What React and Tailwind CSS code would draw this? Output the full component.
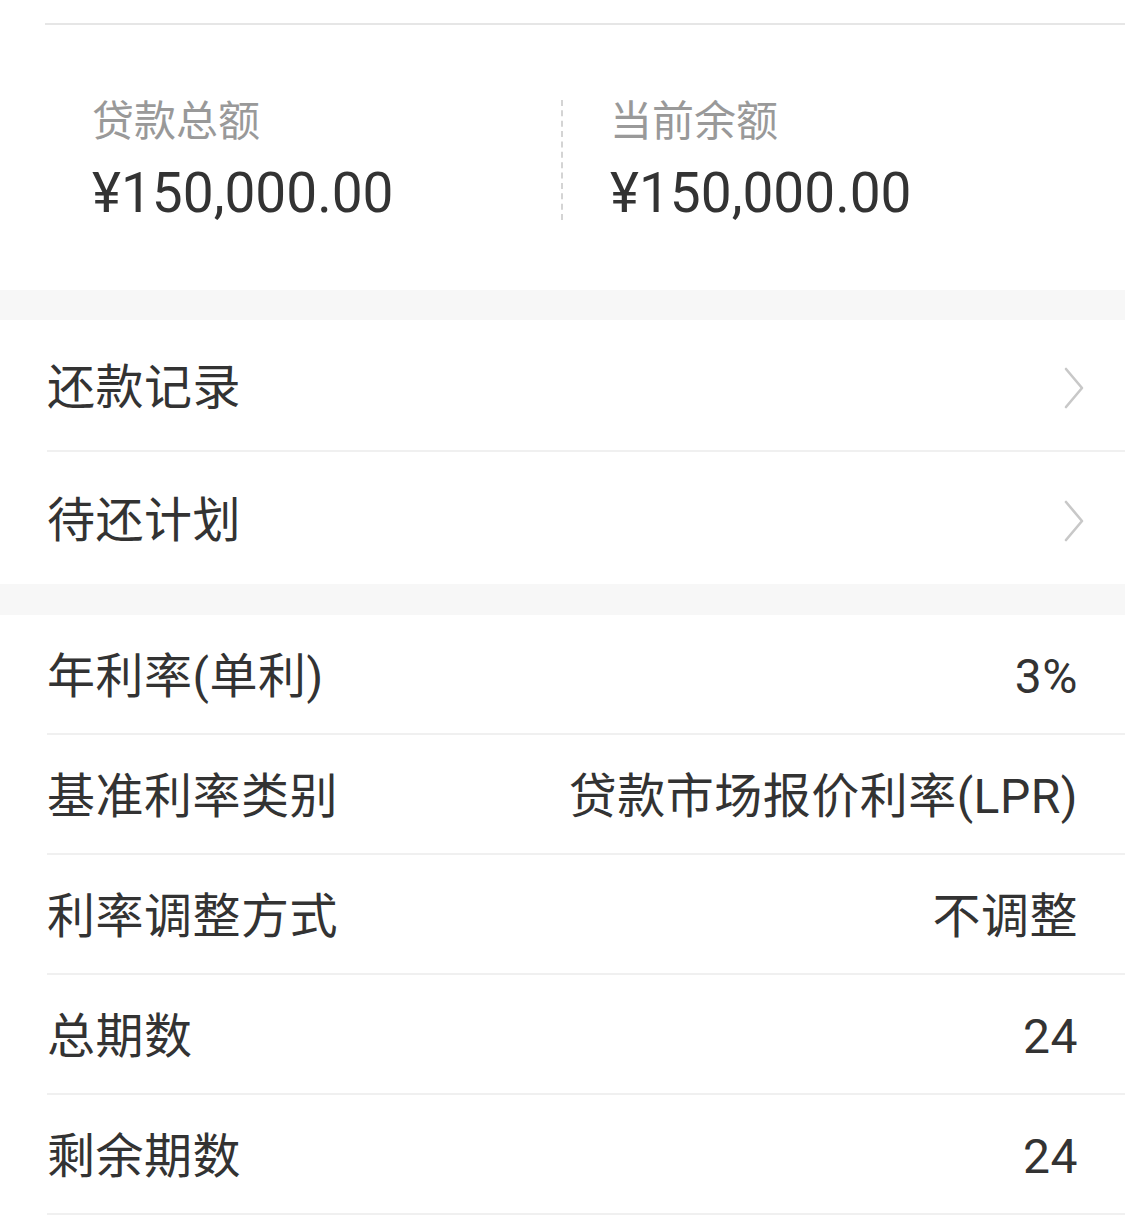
const FONT = { fontFamily: 'Roboto, "Noto Sans CJK SC", sans-serif' };

const LINKS = ['还款记录', '待还计划'];

const DETAILS = [
  { label: '年利率(单利)', value: '3%' },
  { label: '基准利率类别', value: '贷款市场报价利率(LPR)' },
  { label: '利率调整方式', value: '不调整' },
  { label: '总期数', value: '24' },
  { label: '剩余期数', value: '24' },
];

function Summary({ label, amount }) {
  return (
    <div className="flex flex-col">
      <span className="text-[42px] leading-[50px] text-[#999999]">{label}</span>
      <span className="mt-[16px] text-[55px] leading-[60px] text-[#333333]">{amount}</span>
    </div>
  );
}

function Chevron() {
  return (
    <svg width="22" height="42" viewBox="0 0 22 42" fill="none" stroke="#c8c8c8" strokeWidth="2.6" strokeLinecap="round" strokeLinejoin="round">
      <path d="M3 2 L19 21 L3 40" />
    </svg>
  );
}

export default function App() {
  return (
    <div className="w-[1125px] h-[1225px] bg-white overflow-hidden" style={FONT}>
      <div className="pt-[23px] pl-[45px]">
        <div className="h-[2px] bg-[#e6e6e6]" />
      </div>

      {/* summary */}
      <div className="flex items-center h-[265px] pt-[4px]">
        <div className="w-[561px] pl-[92px]">
          <Summary label="贷款总额" amount="¥150,000.00" />
        </div>
        <div className="h-[120px] border-l-2 border-dashed border-[#d4d4d4]" />
        <div className="pl-[47px]">
          <Summary label="当前余额" amount="¥150,000.00" />
        </div>
      </div>

      <div className="h-[30px] bg-[#f7f7f7]" />

      <div className="pl-[47px]">
        {LINKS.map((l, i) => (
          <div key={l} className={`flex items-center justify-between h-[132px] pr-[40px] pt-[5px] ${i === 0 ? 'border-b-2 border-[#f0f0f0]' : ''}`}>
            <span className="text-[48px] text-[#333333] leading-none tracking-[0.5px]">{l}</span>
            <Chevron />
          </div>
        ))}
      </div>

      <div className="h-[31px] bg-[#f7f7f7]" />

      <div className="pl-[47px]">
        {DETAILS.map(d => (
          <div key={d.label} className="flex items-center justify-between h-[120px] pr-[47px] pt-[5px] border-b-2 border-[#f0f0f0]">
            <span className="text-[48px] text-[#333333] leading-none tracking-[0.5px]">{d.label}</span>
            <span className="text-[48px] text-[#333333] leading-none tracking-[0.5px]">{d.value}</span>
          </div>
        ))}
      </div>
    </div>
  );
}
